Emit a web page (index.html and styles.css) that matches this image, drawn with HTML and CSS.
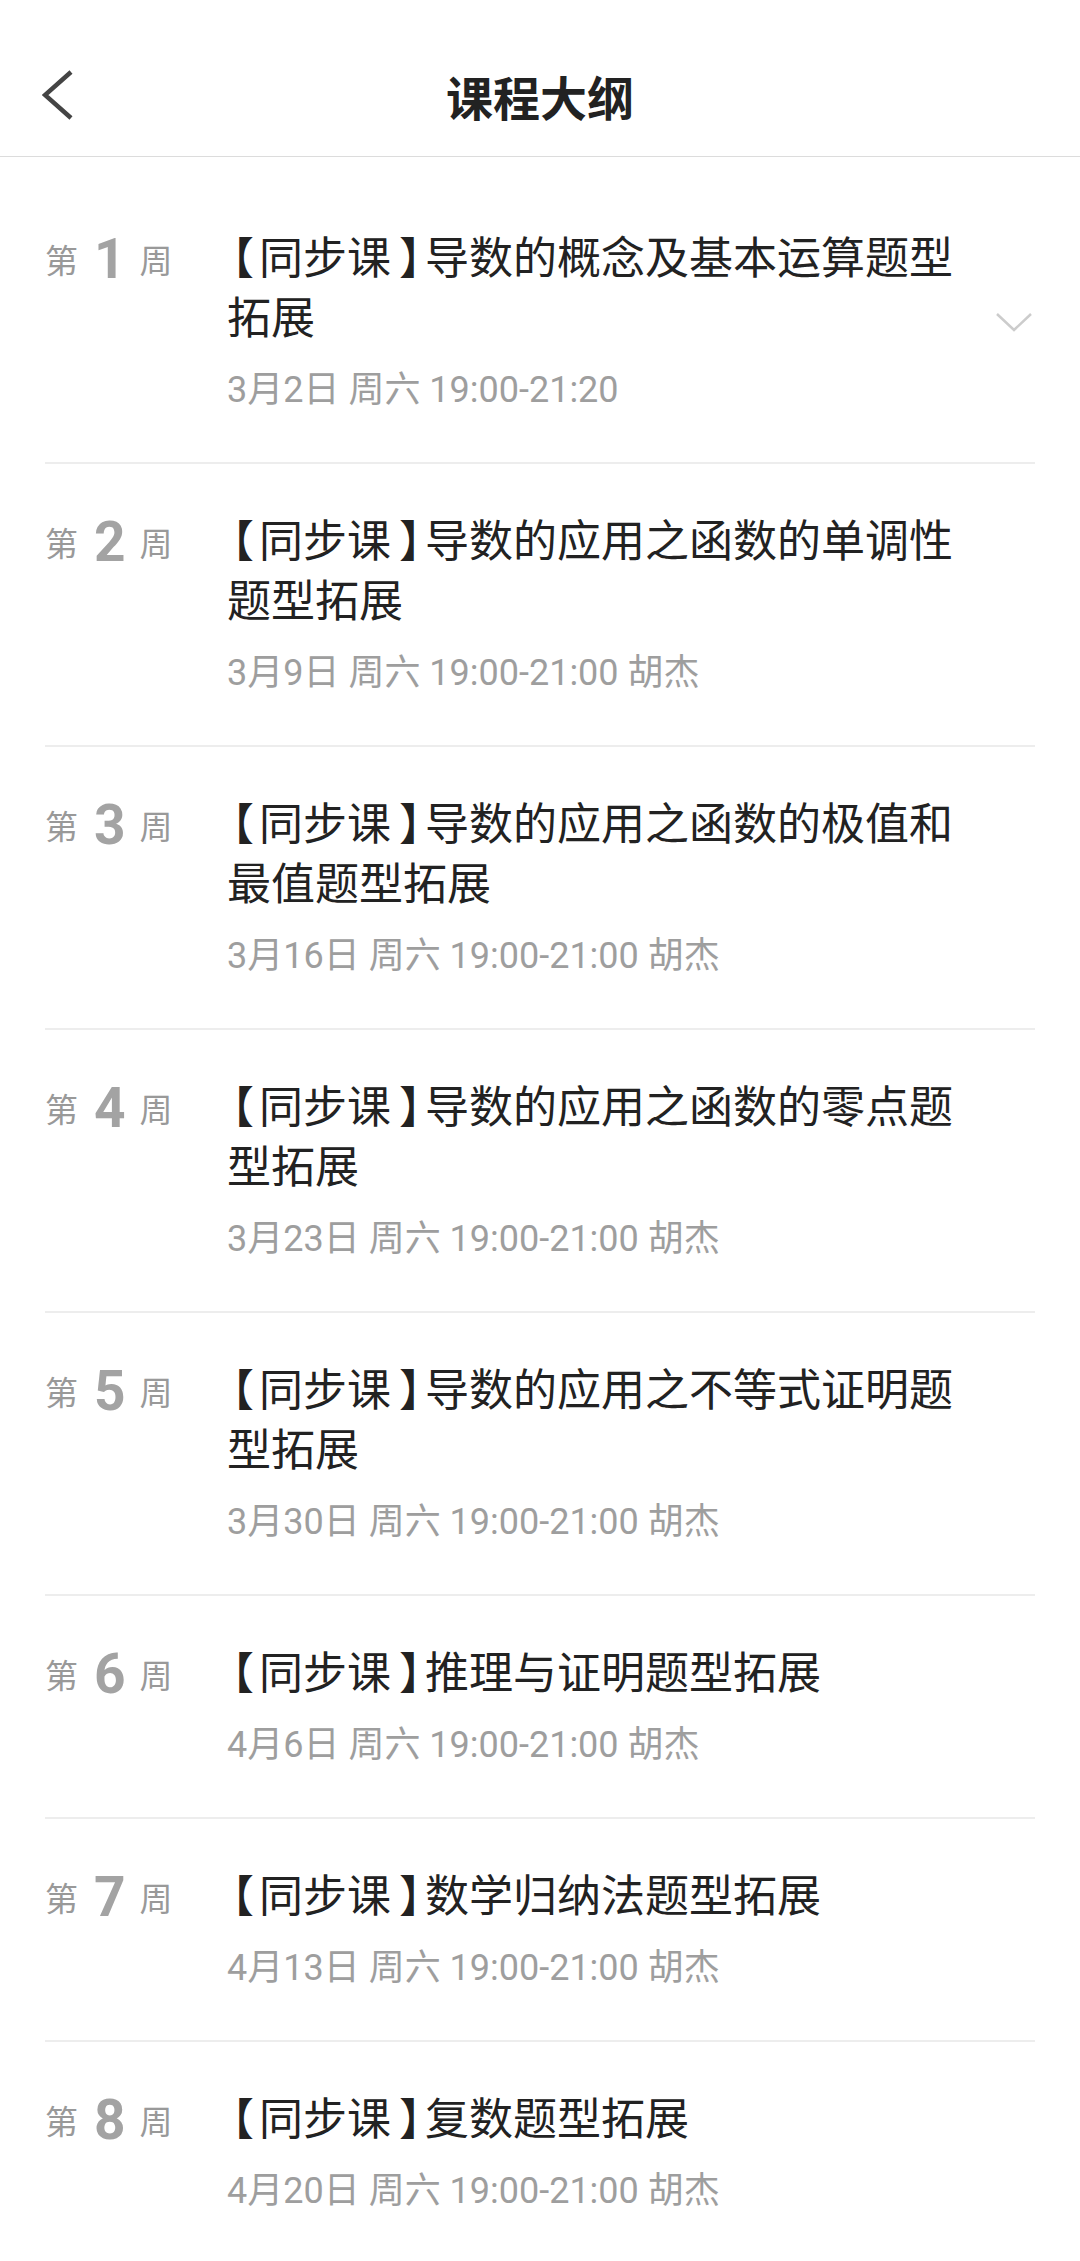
FILE: index.html
```html
<!DOCTYPE html>
<html lang="zh-CN">
<head>
  <meta charset="UTF-8">
  <meta name="viewport" content="width=device-width, initial-scale=1.0">
  <title>课程大纲</title>
  <link rel="stylesheet" href="styles.css">
</head>
<body>
  <div class="topbar">
    <a class="back" href="#">
      <svg width="32" height="50" viewBox="0 0 32 50"><polyline points="29,2 3,25 29,48" fill="none" stroke="#444" stroke-width="4.5"/></svg>
    </a>
    <h1>课程大纲</h1>
    <div></div>
  </div>

  <div class="outline">
    <div class="lesson">
      <div class="week"><span>第</span><b>1</b><span>周</span></div>
      <div class="info">
        <div class="name"><span class="open">【</span>同步课<span class="close">】</span>导数的概念及基本运算题型拓展</div>
        <div class="time">3月2日 周六 19:00-21:20</div>
      </div>
      <div class="arrow">
        <svg width="38" height="20" viewBox="0 0 38 20"><polyline points="2,2 19,18 36,2" fill="none" stroke="#ccc" stroke-width="2.5"/></svg>
      </div>
    </div>

    <div class="lesson">
      <div class="week"><span>第</span><b>2</b><span>周</span></div>
      <div class="info">
        <div class="name"><span class="open">【</span>同步课<span class="close">】</span>导数的应用之函数的单调性题型拓展</div>
        <div class="time">3月9日 周六 19:00-21:00 胡杰</div>
      </div>
      <div class="arrow"></div>
    </div>

    <div class="lesson">
      <div class="week"><span>第</span><b>3</b><span>周</span></div>
      <div class="info">
        <div class="name"><span class="open">【</span>同步课<span class="close">】</span>导数的应用之函数的极值和最值题型拓展</div>
        <div class="time">3月16日 周六 19:00-21:00 胡杰</div>
      </div>
      <div class="arrow"></div>
    </div>

    <div class="lesson">
      <div class="week"><span>第</span><b>4</b><span>周</span></div>
      <div class="info">
        <div class="name"><span class="open">【</span>同步课<span class="close">】</span>导数的应用之函数的零点题型拓展</div>
        <div class="time">3月23日 周六 19:00-21:00 胡杰</div>
      </div>
      <div class="arrow"></div>
    </div>

    <div class="lesson">
      <div class="week"><span>第</span><b>5</b><span>周</span></div>
      <div class="info">
        <div class="name"><span class="open">【</span>同步课<span class="close">】</span>导数的应用之不等式证明题型拓展</div>
        <div class="time">3月30日 周六 19:00-21:00 胡杰</div>
      </div>
      <div class="arrow"></div>
    </div>

    <div class="lesson">
      <div class="week"><span>第</span><b>6</b><span>周</span></div>
      <div class="info">
        <div class="name"><span class="open">【</span>同步课<span class="close">】</span>推理与证明题型拓展</div>
        <div class="time">4月6日 周六 19:00-21:00 胡杰</div>
      </div>
      <div class="arrow"></div>
    </div>

    <div class="lesson">
      <div class="week"><span>第</span><b>7</b><span>周</span></div>
      <div class="info">
        <div class="name"><span class="open">【</span>同步课<span class="close">】</span>数学归纳法题型拓展</div>
        <div class="time">4月13日 周六 19:00-21:00 胡杰</div>
      </div>
      <div class="arrow"></div>
    </div>

    <div class="lesson">
      <div class="week"><span>第</span><b>8</b><span>周</span></div>
      <div class="info">
        <div class="name"><span class="open">【</span>同步课<span class="close">】</span>复数题型拓展</div>
        <div class="time">4月20日 周六 19:00-21:00 胡杰</div>
      </div>
      <div class="arrow"></div>
    </div>
  </div>
</body>
</html>
```

FILE: styles.css
```css
body {
  font-family: Roboto, "Noto Sans CJK SC", sans-serif;
  background: #fff;
  color: #222;
  margin: 0;
  padding: 0;
}

.topbar {
  display: grid;
  grid-template-columns: 1fr auto 1fr;
  align-items: center;
  height: 122px;
  padding-top: 34px;
  border-bottom: 1px solid #dcdcdc;
}

.back {
  display: flex;
  padding-left: 42px;
}

.topbar h1 {
  margin: 0;
  font-size: 47px;
  font-weight: 700;
  color: #222;
}

.outline {
  padding-top: 24px;
}

.lesson {
  display: flex;
  margin: 0 45px;
  padding: 48px 0 48px;
  border-bottom: 2px solid #ededed;
}

.week {
  display: flex;
  align-items: center;
  width: 182px;
  height: 60px;
  flex-shrink: 0;
  color: #999;
  font-size: 33px;
}

.week b {
  font-size: 55px;
  font-weight: 700;
  color: #a3a3a3;
  margin: 0 14px 0 16px;
}

.info {
  flex: 1;
}

.name {
  font-size: 44px;
  line-height: 60px;
  color: #222;
}

/* half-width brackets, a little air around them */
.name .open,
.name .close {
  font-feature-settings: "halt";
}

.name .open {
  padding: 0 5px;
}

.name .close {
  padding: 0 4px 0 8px;
}

.time {
  margin-top: 17px;
  font-size: 36px;
  line-height: 48px;
  color: #9e9e9e;
}

.arrow {
  width: 40px;
  margin-left: 10px;
  align-self: center;
  display: flex;
}
```
